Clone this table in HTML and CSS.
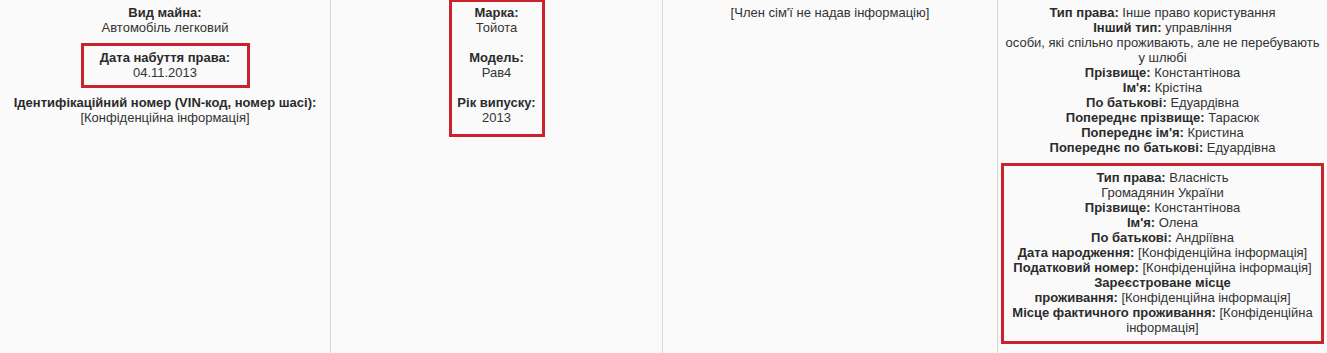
FILE: index.html
```html
<!DOCTYPE html>
<html lang="uk">
<head>
<meta charset="utf-8">
<title>Декларація</title>
<link rel="stylesheet" href="styles.css">
</head>
<body>
<div class="row">
  <div class="cell">
    <div class="item"><b>Вид майна:</b><br>Автомобіль легковий</div>
    <div class="item mark mark-date"><b>Дата набуття права:</b><br>04.11.2013</div>
    <div class="item"><b>Ідентифікаційний номер (VIN-код, номер шасі):</b><br>[Конфіденційна інформація]</div>
  </div>
  <div class="cell">
    <div class="mark mark-car">
      <div class="item"><b>Марка:</b><br>Тойота</div>
      <div class="item"><b>Модель:</b><br>Рав4</div>
      <div class="item"><b>Рік випуску:</b><br>2013</div>
    </div>
  </div>
  <div class="cell">
    <div class="item">[Член сім'ї не надав інформацію]</div>
  </div>
  <div class="cell">
    <div class="item">
      <b>Тип права:</b> Інше право користування<br>
      <b>Інший тип:</b> управління<br>
      особи, які спільно проживають, але не перебувають у шлюбі<br>
      <b>Прізвище:</b> Константінова<br>
      <b>Ім'я:</b> Крістіна<br>
      <b>По батькові:</b> Едуардівна<br>
      <b>Попереднє прізвище:</b> Тарасюк<br>
      <b>Попереднє ім'я:</b> Кристина<br>
      <b>Попереднє по батькові:</b> Едуардівна
    </div>
    <div class="item mark mark-owner">
      <b>Тип права:</b> Власність<br>
      Громадянин України<br>
      <b>Прізвище:</b> Константінова<br>
      <b>Ім'я:</b> Олена<br>
      <b>По батькові:</b> Андріївна<br>
      <b>Дата народження:</b> [Конфіденційна інформація]<br>
      <b>Податковий номер:</b> [Конфіденційна інформація]<br>
      <b>Зареєстроване місце<br>проживання:</b> [Конфіденційна інформація]<br>
      <b>Місце фактичного проживання:</b> [Конфіденційна інформація]
    </div>
  </div>
</div>
</body>
</html>
```
FILE: styles.css
```css
html, body {
  margin: 0;
  padding: 0;
}

body {
  background: #fafafa;
  font-family: "Liberation Sans", Arial, sans-serif;
  font-size: 13px;
  line-height: 15px;
  color: #333;
  overflow: hidden;
}

b {
  font-weight: bold;
  color: #2b2b2b;
}

.row {
  display: grid;
  grid-template-columns: 331px 332px 335px 1fr;
  min-height: 100vh;
}

.cell {
  border-right: 1px solid #d8d8d8;
  padding: 5px 3px;
  text-align: center;
}

.cell:last-child {
  border-right: 0;
}

.item + .item {
  margin-top: 15px;
}

.mark {
  border: 3px solid #c9232d;
  box-sizing: border-box;
}

.mark-date {
  width: 169px;
  margin-left: auto;
  margin-right: auto;
  padding: 4px 0 5px;
}

.item.mark-date {
  margin-top: 8px;
}

.mark-date + .item {
  margin-top: 7px;
}

.mark-car {
  width: 96px;
  margin: -6px auto 0;
  padding: 3px 0 9px;
}

.item.mark-owner {
  margin-top: 8px;
  padding: 4px 2px 6px;
}
```
